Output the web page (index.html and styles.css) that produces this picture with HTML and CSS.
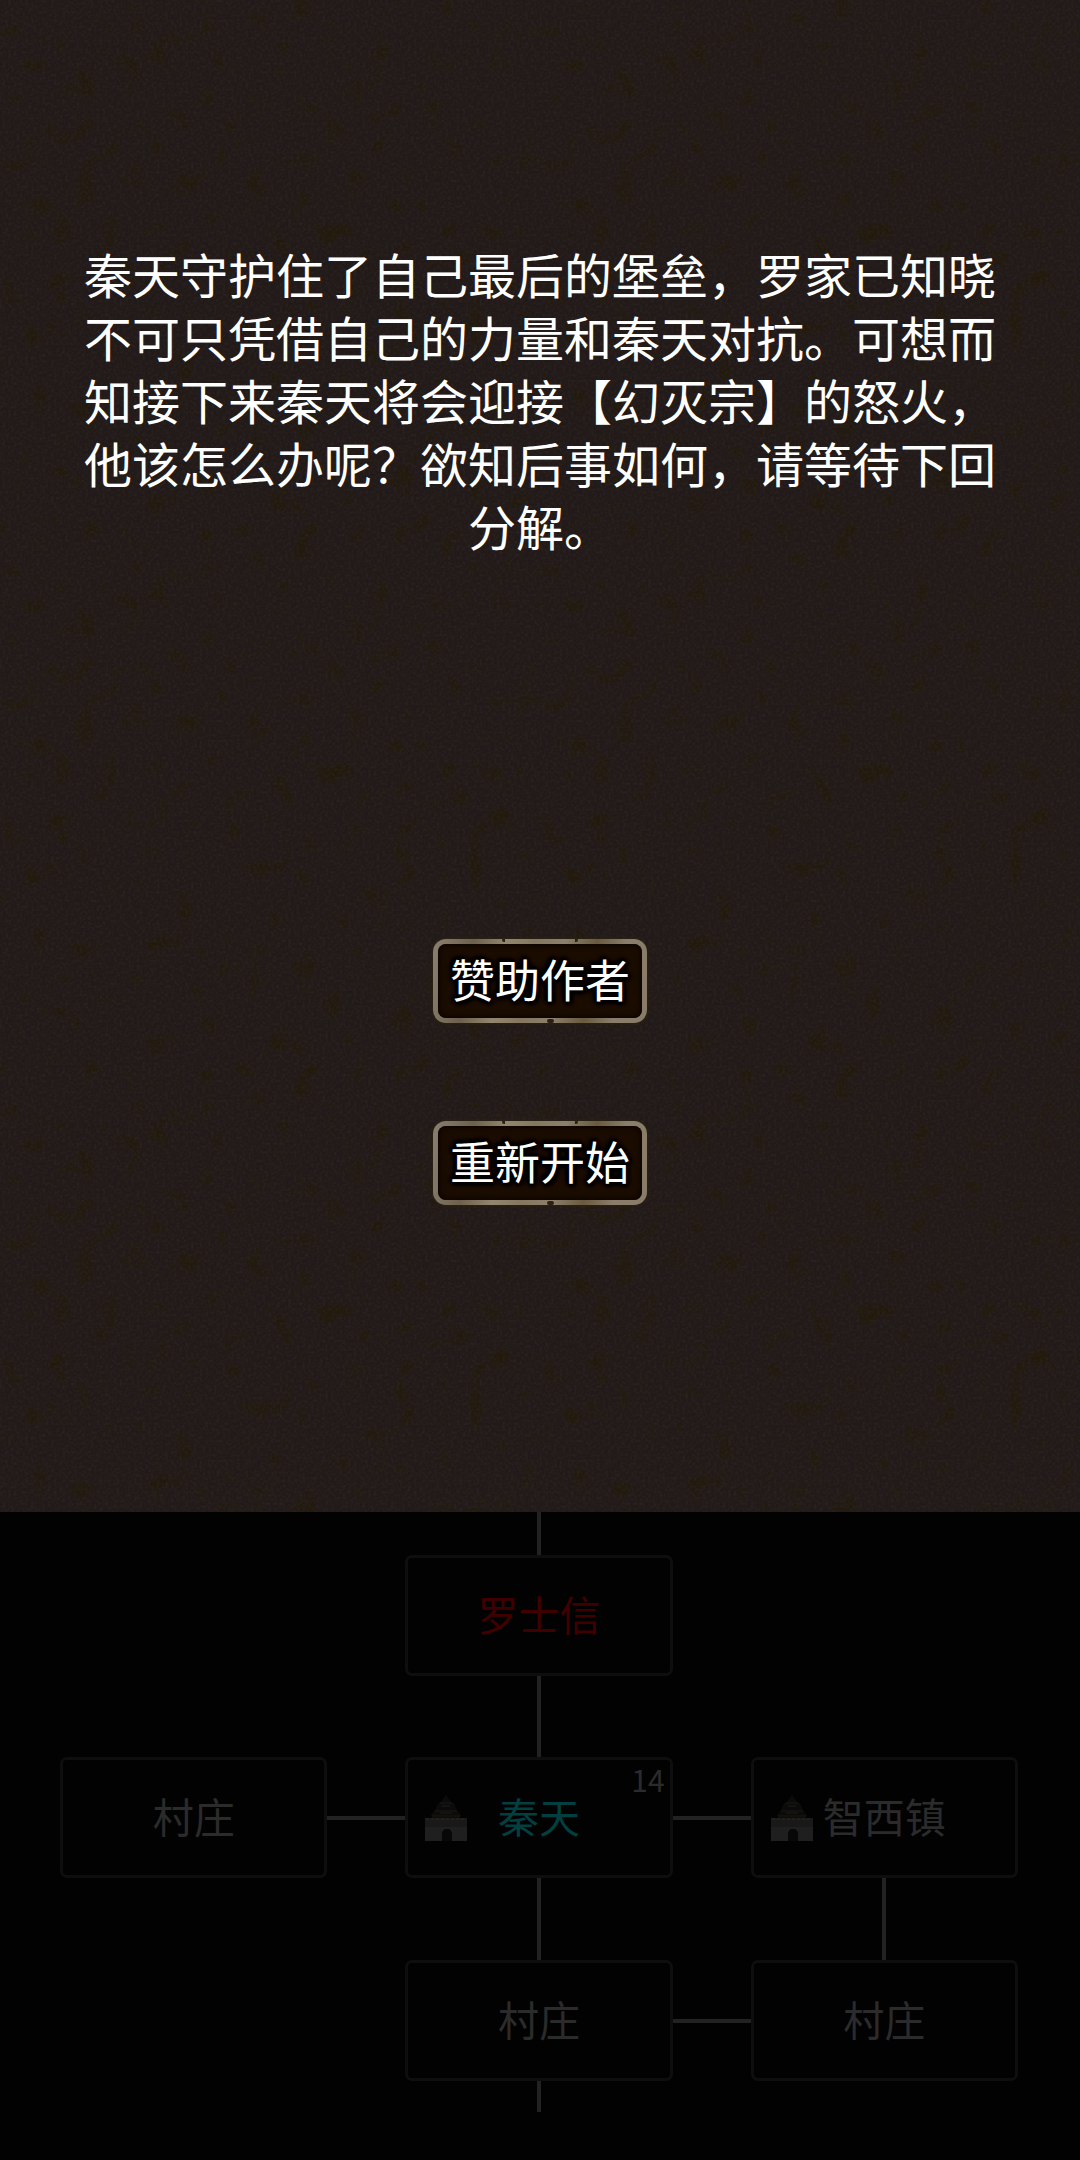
FILE: index.html
```
<!DOCTYPE html>
<html lang="zh-CN">
<head>
    <meta charset="UTF-8">
    <meta name="viewport" content="width=device-width, initial-scale=1.0">
    <title>秦天</title>
    <link rel="stylesheet" href="styles.css">
</head>
<body>
    <!-- Castle icon shared by the map nodes -->
    <svg class="symbols" aria-hidden="true">
        <symbol id="castle" viewBox="0 0 42 46">
            <path d="M21 0 L27 8 L29 8 L32 15 L36 20 L35 23 H7 L6 20 L10 15 L13 8 L15 8 Z" fill="#0b0b0a"/>
            <path d="M15 8 H27 M10 16 H32 M7 21 H35" stroke="#12110d" stroke-width="2" fill="none"/>
            <path d="M17 11 H25 M15 18 H27" stroke="#131313" stroke-width="2" fill="none"/>
            <path d="M0 23 H42 V46 H27 V40 Q27 34 22 34 Q17 34 17 40 V46 H0 Z" fill="#1f1f1f"/>
            <path d="M0 23 H42 V32 H0 Z" fill="#191919"/>
            <path d="M1 24 H41" stroke="#222018" stroke-width="2" stroke-dasharray="3 2"/>
            <path d="M17 46 V40 Q17 34 22 34 Q27 34 27 40 V46 Z" fill="#080808"/>
        </symbol>
    </svg>

    <main class="story">
        <p class="story-text">秦天守护住了自己最后的堡垒，罗家已知晓不可只凭借自己的力量和秦天对抗。可想而知接下来秦天将会迎接【幻灭宗】的怒火，他该怎么办呢？欲知后事如何，请等待下回分解。</p>
        <div class="actions">
            <button type="button" class="btn">赞助作者</button>
            <button type="button" class="btn">重新开始</button>
        </div>
    </main>

    <section class="map">
        <span class="line-v top"></span>
        <div class="node enemy r1 c2">罗士信</div>
        <span class="line-v r12 c2"></span>

        <div class="node r2 c1">村庄</div>
        <span class="line-h r2 c12"></span>
        <div class="node player r2 c2">
            <svg class="castle"><use href="#castle"/></svg>
            秦天
            <span class="count">14</span>
        </div>
        <span class="line-h r2 c23"></span>
        <div class="node r2 c3">
            <svg class="castle"><use href="#castle"/></svg>
            智西镇
        </div>

        <span class="line-v r23 c2"></span>
        <span class="line-v r23 c3"></span>

        <div class="node r3 c2">村庄</div>
        <span class="line-h r3 c23"></span>
        <div class="node r3 c3">村庄</div>
        <span class="line-v bottom"></span>
    </section>
</body>
</html>
```
FILE: styles.css
```
* {
    box-sizing: border-box;
}
body {
    margin: 0;
    min-height: 100vh;
    display: flex;
    flex-direction: column;
    background-color: #020202;
    font-family: "Noto Sans CJK SC", sans-serif;
}
.symbols {
    position: absolute;
    width: 0;
    height: 0;
}

/* Story panel */
.story {
    min-height: 70vh;
    padding: 242px 80px 80px;
    background-color: #221a18;
    /* fine grain over larger olive patches */
    background-image:
        url("data:image/svg+xml,%3Csvg xmlns='http://www.w3.org/2000/svg' width='360' height='360'%3E%3Cfilter id='n' x='0' y='0' width='100%25' height='100%25' color-interpolation-filters='sRGB'%3E%3CfeTurbulence type='fractalNoise' baseFrequency='0.35' numOctaves='2' seed='4' stitchTiles='stitch'/%3E%3CfeColorMatrix values='0 0 0 0 0.3 0 0 0 0 0.3 0 0 0 0 0.36 0.9 0 0 0 -0.39'/%3E%3C/filter%3E%3Crect width='360' height='360' filter='url(%23n)' opacity='0.4'/%3E%3C/svg%3E"),
        url("data:image/svg+xml,%3Csvg xmlns='http://www.w3.org/2000/svg' width='540' height='540'%3E%3Cfilter id='p' x='0' y='0' width='100%25' height='100%25' color-interpolation-filters='sRGB'%3E%3CfeTurbulence type='fractalNoise' baseFrequency='0.04' numOctaves='2' seed='9' stitchTiles='stitch'/%3E%3CfeColorMatrix values='0 0 0 0 0.13 0 0 0 0 0.095 0 0 0 0 0.02 4 0 0 0 -2.3'/%3E%3C/filter%3E%3Crect width='540' height='540' filter='url(%23p)' opacity='0.7'/%3E%3C/svg%3E");
}
.story-text {
    margin: 0;
    font-size: 48px;
    line-height: 63px;
    text-align: center;
    color: #fff;
}
.actions {
    display: flex;
    flex-direction: column;
    align-items: center;
    gap: 98px;
    margin-top: 382px;
}
.btn {
    position: relative;
    height: 84px;
    padding: 0 12px 4px;
    border: 5px solid transparent;
    border-radius: 13px;
    background:
        linear-gradient(#1b0c00, #1b0c00) padding-box,
        linear-gradient(100deg, #8b8070, #6d614d 18%, #93866f 32%, #85775f 45%, #8c806c 58%, #695a3f 72%, #8a7e6b 85%, #887c69) border-box;
    box-shadow: 0 0 3px 1px #2b2412, inset 0 0 5px 2px #0c0500;
    font-family: inherit;
    font-size: 45px;
    line-height: 60px;
    color: #fff;
    text-shadow: 0 0 3px #000, 0 0 4px #000, 3px 0 3px #000, -3px 0 3px #000, 0 3px 3px #000, 0 -3px 3px #000, 3px 3px 4px #000, -3px -3px 4px #000;
    cursor: pointer;
}
/* worn nicks in the frame */
.btn::before,
.btn::after {
    content: "";
    position: absolute;
    height: 4px;
    border-radius: 2px;
}
.btn::before {
    top: -6px;
    left: 64px;
    width: 76px;
    background: linear-gradient(90deg, #2b2112 3px, transparent 3px 73px, #2b2112 73px);
}
.btn::after {
    bottom: -5px;
    left: 109px;
    width: 7px;
    background-color: #2b2112;
}

/* Map under the dark overlay */
.map {
    flex: 1;
    display: grid;
    grid-template-columns: 1fr 78px 1fr 78px 1fr;
    grid-template-rows: 43px 121px 81px 121px 82px 121px 31px;
    padding: 0 62px 0 60px;
}
.r1 { grid-row: 2; }
.r12 { grid-row: 3; }
.r2 { grid-row: 4; }
.r23 { grid-row: 5; }
.r3 { grid-row: 6; }
.c1 { grid-column: 1; }
.c12 { grid-column: 2; }
.c2 { grid-column: 3; }
.c23 { grid-column: 4; }
.c3 { grid-column: 5; }
.node {
    position: relative;
    display: flex;
    align-items: center;
    justify-content: center;
    padding-bottom: 6px;
    border: 3px solid #0e0e0e;
    border-radius: 7px;
    font-size: 41px;
    line-height: 60px;
    color: #2b2b2b;
}
.enemy {
    color: #400000;
}
.player {
    color: #004040;
}
.count {
    position: absolute;
    top: 1px;
    right: 5px;
    font-size: 30px;
    line-height: 36px;
    color: #2b2b2b;
}
.castle {
    position: absolute;
    left: 17px;
    top: 35px;
    width: 42px;
    height: 46px;
}
.line-v {
    justify-self: center;
    width: 4px;
    margin: -2px 0;
    background-color: #222;
}
.line-h {
    align-self: center;
    height: 4px;
    margin: 0 -2px;
    background-color: #222;
}
.top {
    grid-row: 1;
    grid-column: 3;
    margin-top: 0;
}
.bottom {
    grid-row: 7;
    grid-column: 3;
    margin-bottom: 0;
}
```
